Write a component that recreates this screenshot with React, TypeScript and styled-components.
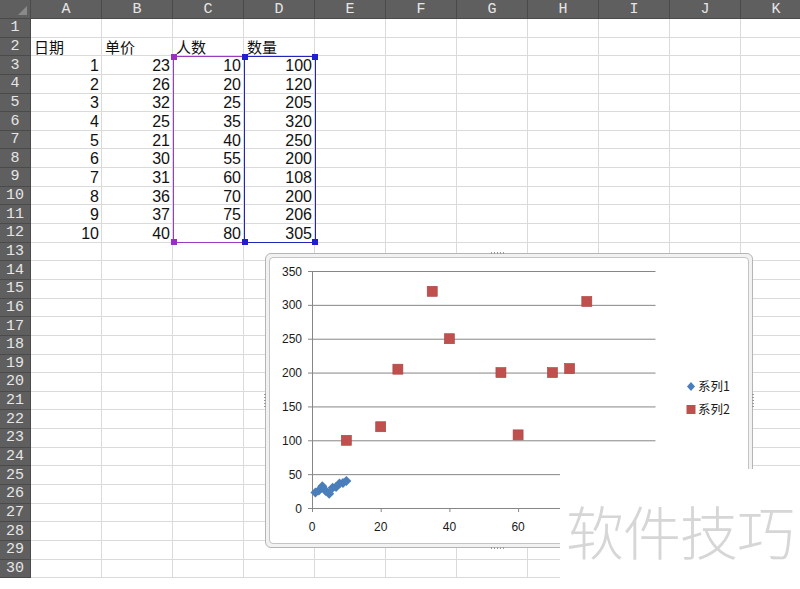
import React from 'react';
import styled, { createGlobalStyle, css } from 'styled-components';

const GlobalStyle = createGlobalStyle`
  html, body {
    margin: 0;
    padding: 0;
    background: #ffffff;
  }
`;

const Sheet = styled.div`
  position: relative;
  width: 800px;
  height: 589px;
  overflow: hidden;
  background: #ffffff;
`;

const Grid = styled.div`
  display: grid;
  grid-template-columns: 31px repeat(11, 71px);
  grid-template-rows: 19px repeat(30, 18.65px);
`;

const Corner = styled.div`
  position: relative;
  background: #5f5f5f;
  border-right: 1px solid #4a4a4a;
  border-bottom: 1px solid #4a4a4a;

  &::after {
    content: '';
    position: absolute;
    right: 3px;
    bottom: 3px;
    border-left: 9px solid transparent;
    border-bottom: 9px solid #8a8a8a;
  }
`;

const HeadCell = styled.div`
  background: #5f5f5f;
  color: #e6e6e6;
  font-family: 'Liberation Mono', 'DejaVu Sans Mono', monospace;
  font-size: 15px;
  line-height: 15px;
  display: flex;
  align-items: center;
  justify-content: center;
  border-right: 1px solid #4a4a4a;
  border-bottom: 1px solid #4a4a4a;
  box-sizing: border-box;
`;

const Cell = styled.div<{ $num?: boolean }>`
  box-sizing: border-box;
  border-right: 1px solid #dadada;
  border-bottom: 1px solid #dadada;
  font-family: ${(p) =>
    p.$num ? "'Liberation Sans', Arial, sans-serif" : "'Noto Sans CJK SC', sans-serif"};
  font-size: ${(p) => (p.$num ? '16px' : '15px')};
  line-height: 16px;
  color: #111111;
  display: flex;
  align-items: center;
  justify-content: ${(p) => (p.$num ? 'flex-end' : 'flex-start')};
  padding: ${(p) => (p.$num ? '2px 2px 0 3px' : '1px 2px 0 3px')};
  white-space: nowrap;
`;

// selection outline drawn over the C3:C12 / D3:D12 ranges
const Selection = styled.div<{ $col: number; $color: string }>`
  position: absolute;
  top: 56px;
  left: ${(p) => 31 + p.$col * 71}px;
  width: 72px;
  height: 187px;
  box-sizing: border-box;
  border: 1px solid ${(p) => p.$color};
`;

const cornerPos = {
  tl: css`top: -3px; left: -3px;`,
  tr: css`top: -3px; right: -3px;`,
  bl: css`bottom: -3px; left: -3px;`,
  br: css`bottom: -3px; right: -3px;`,
};

const Handle = styled.div<{ $at: keyof typeof cornerPos; $color: string }>`
  position: absolute;
  width: 6px;
  height: 6px;
  background: ${(p) => p.$color};
  ${(p) => cornerPos[p.$at]}
`;

const ChartFrame = styled.div`
  position: absolute;
  left: 265px;
  top: 253px;
  width: 488px;
  height: 295px;
  box-sizing: border-box;
  border: 1px solid #b5b5b5;
  border-radius: 6px;
  background: #f2f2f2;
  padding: 3px;
`;

const ChartInner = styled.div`
  width: 100%;
  height: 100%;
  box-sizing: border-box;
  border: 1px solid #c4c4c4;
  border-radius: 4px;
  background: #ffffff;
  overflow: hidden;
`;

const gripSide = {
  top: css`top: -2px; left: 225px; width: 14px; height: 2px;`,
  bottom: css`bottom: -2px; left: 225px; width: 14px; height: 2px;`,
  left: css`left: -2px; top: 140px; width: 2px; height: 14px;`,
  right: css`right: -2px; top: 140px; width: 2px; height: 14px;`,
};

const Grip = styled.div<{ $side: keyof typeof gripSide }>`
  position: absolute;
  background-image: ${(p) =>
    p.$side === 'left' || p.$side === 'right'
      ? 'repeating-linear-gradient(to bottom, #9a9a9a 0 1px, transparent 1px 3px)'
      : 'repeating-linear-gradient(to right, #9a9a9a 0 1px, transparent 1px 3px)'};
  ${(p) => gripSide[p.$side]}
`;

const Cover = styled.div`
  position: absolute;
  left: 560px;
  top: 469px;
  right: 0;
  bottom: 0;
  background: #ffffff;
  display: flex;
  align-items: center;
  padding-left: 6px;
  padding-top: 2px;
`;

const Watermark = styled.span`
  font-family: 'Noto Sans CJK SC', sans-serif;
  font-weight: 300;
  font-size: 58px;
  letter-spacing: -1px;
  color: #d6d6d6;
  line-height: 1;
`;

const cols = ['A', 'B', 'C', 'D', 'E', 'F', 'G', 'H', 'I', 'J', 'K'];

const data = [
  [1, 23, 10, 100],
  [2, 26, 20, 120],
  [3, 32, 25, 205],
  [4, 25, 35, 320],
  [5, 21, 40, 250],
  [6, 30, 55, 200],
  [7, 31, 60, 108],
  [8, 36, 70, 200],
  [9, 37, 75, 206],
  [10, 40, 80, 305],
];

const titles = ['日期', '单价', '人数', '数量'];

// plot coordinates inside the chart's inner box
const X0 = 42;
const Y0 = 250;
const SX = 3.435;
const SY = 237 / 350;
const px = (x: number) => X0 + x * SX;
const py = (y: number) => Y0 - y * SY;

const Plot = () => {
  const font = "'Liberation Sans', 'Noto Sans', sans-serif";
  const cjk = "'Noto Sans CJK SC', sans-serif";
  return (
    <svg width="478" height="285">
      {[0, 50, 100, 150, 200, 250, 300, 350].map((v) => (
        <g key={v}>
          <line x1={X0 - 4} x2={px(100)} y1={py(v) + 0.5} y2={py(v) + 0.5} stroke="#868686" strokeWidth="1" />
          <text x={X0 - 10} y={py(v) + 4.5} textAnchor="end" fontSize="12" fontFamily={font} fill="#1a1a1a">
            {v}
          </text>
        </g>
      ))}
      <line x1={X0 + 0.5} x2={X0 + 0.5} y1={py(350)} y2={Y0 + 4} stroke="#868686" />
      {[0, 20, 40, 60, 80, 100].map((v) => (
        <line key={v} x1={px(v) + 0.5} x2={px(v) + 0.5} y1={Y0} y2={Y0 + 4} stroke="#868686" />
      ))}
      {/* labels 80 and 100 sit under the watermark cover */}
      {[0, 20, 40, 60].map((v) => (
        <text key={v} x={px(v)} y={Y0 + 23} textAnchor="middle" fontSize="12" fontFamily={font} fill="#1a1a1a">
          {v}
        </text>
      ))}
      {data.map(([a, b]) => (
        <polygon
          key={`s1-${a}`}
          points={`${px(a)},${py(b) - 5} ${px(a) + 5},${py(b)} ${px(a)},${py(b) + 5} ${px(a) - 5},${py(b)}`}
          fill="#4a7ebb"
        />
      ))}
      {data.map(([, , c, d]) => (
        <rect key={`s2-${c}`} x={px(c) - 5} y={py(d) - 5} width="10" height="10" fill="#c0504d" stroke="#a8413e" strokeWidth="0.6" />
      ))}
      <polygon points="421,124 425,128.5 421,133 417,128.5" fill="#4a7ebb" />
      <text x="428" y="133" fontSize="12.5" fontFamily={cjk} fill="#1a1a1a">
        系列1
      </text>
      <rect x="416.5" y="147" width="9" height="9" fill="#c0504d" />
      <text x="428" y="156" fontSize="12.5" fontFamily={cjk} fill="#1a1a1a">
        系列2
      </text>
    </svg>
  );
};

const App = () => {
  const rows = Array.from({ length: 30 }, (_, i) => i + 1);

  const cellContent = (row: number, col: number) => {
    if (row === 2 && col < 4) return titles[col];
    if (row >= 3 && row <= 12 && col < 4) return String(data[row - 3][col]);
    return '';
  };

  return (
    <>
      <GlobalStyle />
      <Sheet>
        <Grid>
          <Corner />
          {cols.map((c) => (
            <HeadCell key={c}>{c}</HeadCell>
          ))}
          {rows.map((r) => (
            <React.Fragment key={r}>
              <HeadCell>{r}</HeadCell>
              {cols.map((c, ci) => (
                <Cell key={c} $num={r >= 3}>
                  {cellContent(r, ci)}
                </Cell>
              ))}
            </React.Fragment>
          ))}
        </Grid>

        <Selection $col={2} $color="#9a3cbf">
          <Handle $at="tl" $color="#9a2fbf" />
          <Handle $at="bl" $color="#9a2fbf" />
        </Selection>
        <Selection $col={3} $color="#2424b8">
          <Handle $at="tl" $color="#1f1fd0" />
          <Handle $at="tr" $color="#1f1fd0" />
          <Handle $at="bl" $color="#1f1fd0" />
          <Handle $at="br" $color="#1f1fd0" />
        </Selection>

        <ChartFrame>
          <ChartInner>
            <Plot />
          </ChartInner>
          <Grip $side="top" />
          <Grip $side="bottom" />
          <Grip $side="left" />
          <Grip $side="right" />
        </ChartFrame>

        <Cover>
          <Watermark>软件技巧</Watermark>
        </Cover>
      </Sheet>
    </>
  );
};

export default App;
